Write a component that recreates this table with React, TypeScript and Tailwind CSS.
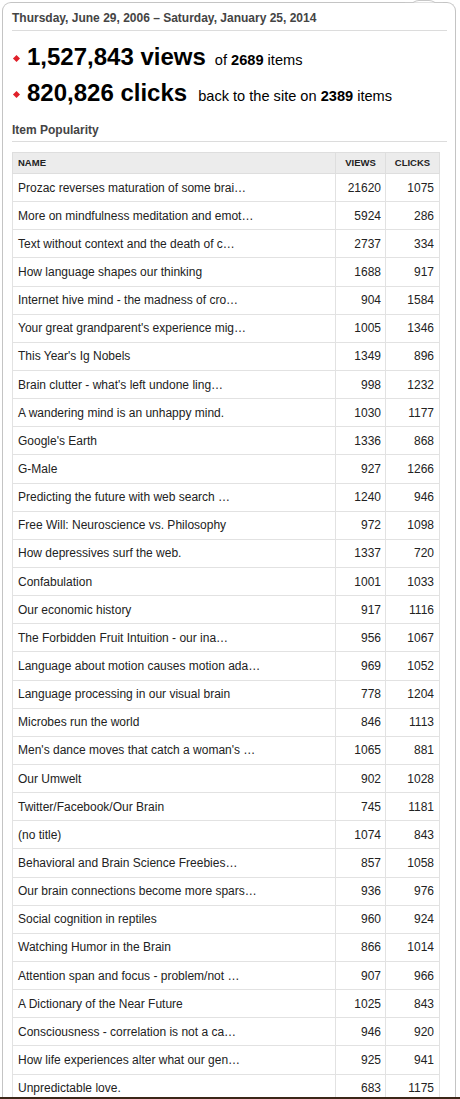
const rows: [string, number, number][] = [
  ["Prozac reverses maturation of some brai…", 21620, 1075],
  ["More on mindfulness meditation and emot…", 5924, 286],
  ["Text without context and the death of c…", 2737, 334],
  ["How language shapes our thinking", 1688, 917],
  ["Internet hive mind - the madness of cro…", 904, 1584],
  ["Your great grandparent's experience mig…", 1005, 1346],
  ["This Year's Ig Nobels", 1349, 896],
  ["Brain clutter - what's left undone ling…", 998, 1232],
  ["A wandering mind is an unhappy mind.", 1030, 1177],
  ["Google's Earth", 1336, 868],
  ["G-Male", 927, 1266],
  ["Predicting the future with web search …", 1240, 946],
  ["Free Will: Neuroscience vs. Philosophy", 972, 1098],
  ["How depressives surf the web.", 1337, 720],
  ["Confabulation", 1001, 1033],
  ["Our economic history", 917, 1116],
  ["The Forbidden Fruit Intuition - our ina…", 956, 1067],
  ["Language about motion causes motion ada…", 969, 1052],
  ["Language processing in our visual brain", 778, 1204],
  ["Microbes run the world", 846, 1113],
  ["Men's dance moves that catch a woman's …", 1065, 881],
  ["Our Umwelt", 902, 1028],
  ["Twitter/Facebook/Our Brain", 745, 1181],
  ["(no title)", 1074, 843],
  ["Behavioral and Brain Science Freebies…", 857, 1058],
  ["Our brain connections become more spars…", 936, 976],
  ["Social cognition in reptiles", 960, 924],
  ["Watching Humor in the Brain", 866, 1014],
  ["Attention span and focus - problem/not …", 907, 966],
  ["A Dictionary of the Near Future", 1025, 843],
  ["Consciousness - correlation is not a ca…", 946, 920],
  ["How life experiences alter what our gen…", 925, 941],
  ["Unpredictable love.", 683, 1175],
];

function Bullet() {
  return <span className="inline-block w-[5px] h-[5px] bg-[#e0202a] rotate-45 mr-[8px] relative top-[-4px]" />;
}

export default function App() {
  return (
    <div className="h-[1099px] w-[460px] overflow-hidden bg-white font-['Liberation_Sans',Arial,sans-serif] flex flex-col">
      <div className="relative h-[1097px] pt-[2px] pl-[2px] pr-[4px] overflow-hidden">
        {/* popover arrow */}
        <svg className="absolute left-[405px] top-0" width="38" height="4" viewBox="0 0 38 4">
          <path d="M0 2.5 L8 2.5 Q11 0.5 14 0.5 L24 0.5 Q27 0.5 30 2.5 L38 2.5" fill="white" stroke="#c8c8c8" strokeWidth="1" />
        </svg>
        <div className="h-full border border-[#c4c4c4] border-b-0 rounded-t-[9px] px-[9px] pt-[8px]">
          <div className="text-[12px] font-bold text-[#444] leading-[14px] pb-[5px] border-b border-[#dcdcdc] mr-[-1px]">
            Thursday, June 29, 2006 – Saturday, January 25, 2014
          </div>
          <div className="mt-[11px] flex items-baseline text-black pl-[2px]">
            <Bullet />
            <span className="text-[24px] font-bold leading-[30px]">1,527,843 views</span>
            <span className="text-[14.6px] ml-[9px]">of <b>2689</b> items</span>
          </div>
          <div className="mt-[6px] flex items-baseline text-black pl-[2px]">
            <Bullet />
            <span className="text-[24px] font-bold leading-[30px]">820,826 clicks</span>
            <span className="text-[14.6px] ml-[11px]">back to the site on <b>2389</b> items</span>
          </div>
          <div className="mt-[15px] text-[12px] font-bold text-[#444] leading-[14px] pb-[4px] border-b border-[#dcdcdc] mr-[-1px]">
            Item Popularity
          </div>
          <table className="mt-[10px] w-[428px] border-collapse text-[12px] text-[#222]">
            <thead>
              <tr className="bg-[#ececec] h-[21px]">
                <th className="border border-[#dedede] text-left font-bold text-[9.5px] pl-[5px] text-[#222]">NAME</th>
                <th className="border border-[#dedede] w-[50px] text-center font-bold text-[9.5px] text-[#222]">VIEWS</th>
                <th className="border border-[#dedede] w-[54px] text-center font-bold text-[9.5px] text-[#222]">CLICKS</th>
              </tr>
            </thead>
            <tbody>
              {rows.map(([name, views, clicks]) => (
                <tr key={name} className="h-[28.15px]">
                  <td className="border border-[#e2e2e2] pl-[5px]">{name}</td>
                  <td className="border border-[#e2e2e2] text-right pr-[4px]">{views}</td>
                  <td className="border border-[#e2e2e2] text-right pr-[5px]">{clicks}</td>
                </tr>
              ))}
            </tbody>
          </table>
        </div>
      </div>
      <div className="h-[2px] bg-[#3b2718]" />
    </div>
  );
}
